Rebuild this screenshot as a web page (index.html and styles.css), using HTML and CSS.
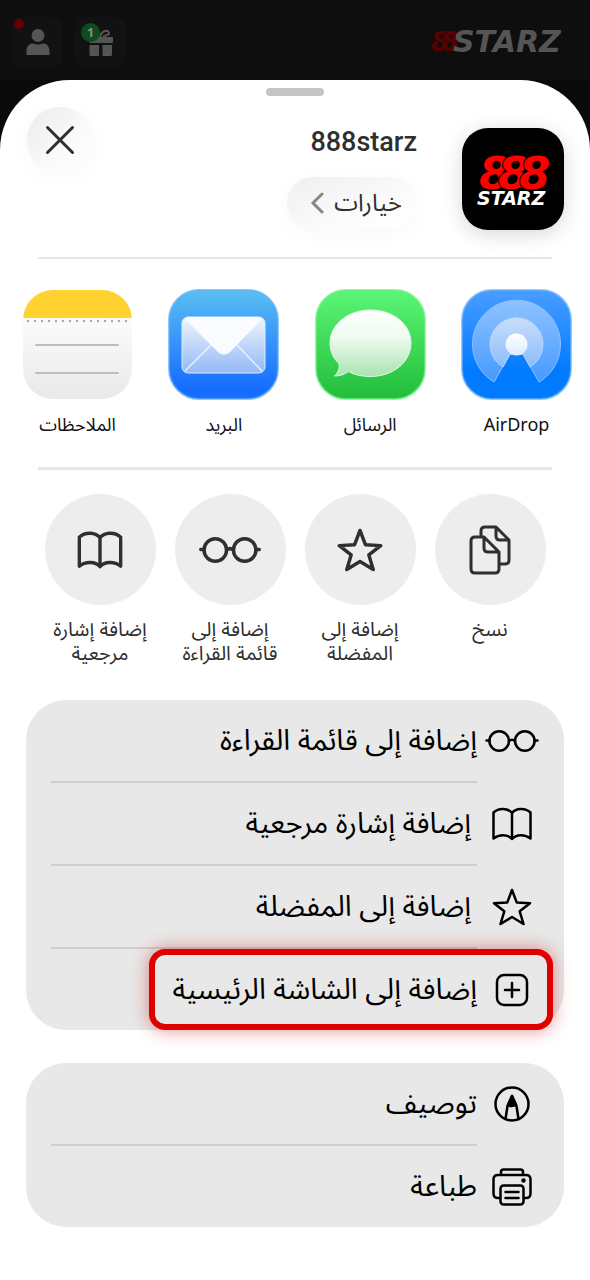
FILE: index.html
```html
<!DOCTYPE html>
<html lang="ar" dir="rtl">
<head>
  <meta charset="UTF-8" />
  <meta name="viewport" content="width=device-width, initial-scale=1.0"/>
  <title>888starz</title>
  <link rel="stylesheet" href="styles.css">
</head>
<body>

  <!-- Shared icons -->
  <svg class="sprite" aria-hidden="true">
    <symbol id="glasses" viewBox="0 0 54 24">
      <circle cx="14.2" cy="12" r="9.8"/>
      <circle cx="39.8" cy="12" r="9.8"/>
      <path d="M24 12q3-2.400 6 0M1.500 11.500h3M49.500 11.500h3"/>
    </symbol>
    <symbol id="book" viewBox="0 0 40 34">
      <path d="M20 6C16 1 7 .5 1.500 5.500v26c5.500-4.500 14.500-4.500 18.500.5 4-5 13-5 18.500-.5v-26C33 .5 24 1 20 6zM20 6v26"/>
    </symbol>
    <symbol id="star" viewBox="0 0 40 38">
      <path d="M20 2l4.700 12.400L38 15.200 27.700 23.300 31.500 36 20 29 8.500 36l3.800-12.700L2 15.200l13.300-.8z"/>
    </symbol>
  </svg>

  <header class="site-header">
    <svg class="site-logo" viewBox="0 0 142 26" role="img" aria-label="888starz">
      <g class="logo-eights">
        <text x="1" y="22">8</text>
        <text x="11" y="22">8</text>
      </g>
      <text class="logo-word" x="23" y="23">STARZ</text>
    </svg>
    <div class="site-actions">
      <button class="site-btn" aria-label="الهدايا">
        <svg width="28" height="28" viewBox="0 0 28 28">
          <path d="M2 9h24v4.500q0 1.500-1.500 1.500h-21Q2 15 2 13.500zM2.500 17H12v11H4Q2.500 28 2.500 26.500zM15.500 17H25v9.500q0 1.500-1.500 1.500h-8z"/>
          <path class="bow" d="M13 9q1-5 5-6t4 3l-6 3"/>
        </svg>
        <span class="badge">1</span>
      </button>
      <button class="site-btn" aria-label="الحساب">
        <svg width="28" height="28" viewBox="0 0 28 28">
          <circle cx="14" cy="7.500" r="6.500"/>
          <path d="M2.500 27v-3.500c0-5.500 3-8 6.500-8q5 2 10 0c3.500 0 6.500 2.500 6.500 8V27z"/>
        </svg>
        <span class="dot"></span>
      </button>
    </div>
  </header>

  <main class="sheet">
    <div class="handle"></div>

    <div class="sheet-header">
      <svg class="app-logo" viewBox="0 0 102 102" role="img" aria-label="888starz">
        <g class="app-eights">
          <text x="17" y="61">8</text>
          <text x="36" y="61">8</text>
          <text x="57" y="61">8</text>
        </g>
        <text class="app-word" x="15" y="77">STARZ</text>
      </svg>
      <div class="app-info">
        <h1>888starz</h1>
        <button class="options">
          خيارات
          <svg width="14" height="24" viewBox="0 0 14 24"><path d="M12 3L3 12l9 9"/></svg>
        </button>
      </div>
      <button class="close" aria-label="إغلاق">
        <svg width="30" height="30" viewBox="0 0 30 30"><path d="M2.500 2.500l25 25M27.500 2.500l-25 25"/></svg>
      </button>
    </div>

    <hr class="divider">

    <div class="apps">
      <button class="app">
        <svg viewBox="0 0 111 111">
          <defs>
            <linearGradient id="airBg" x2="0" y2="1"><stop offset="0" stop-color="#4a9dff"/><stop offset=".75" stop-color="#007aff"/></linearGradient>
            <linearGradient id="airOuter" x2="0" y2="1"><stop offset="0" stop-color="#8fc2ff"/><stop offset="1" stop-color="#459aff"/></linearGradient>
            <linearGradient id="airInner" x2="0" y2="1"><stop offset="0" stop-color="#c9defb"/><stop offset="1" stop-color="#8cbcfa"/></linearGradient>
            <linearGradient id="airDot" x2="0" y2="1"><stop offset="0" stop-color="#fff"/><stop offset="1" stop-color="#dcebfd"/></linearGradient>
          </defs>
          <rect x="1" y="1" width="109" height="109" rx="30" fill="url(#airBg)" stroke="#69b2ff" stroke-opacity=".7" stroke-width="2"/>
          <path d="M33 93A44 44 0 1 1 78 93L62 65H49z" fill="url(#airOuter)" stroke="#8cc1ff"/>
          <path d="M42 78A26.500 26.500 0 1 1 69 78L62 65H49z" fill="url(#airInner)" stroke="#b7d5ff"/>
          <circle cx="55.500" cy="55.500" r="11" fill="url(#airDot)"/>
        </svg>
        <span>AirDrop</span>
      </button>
      <button class="app">
        <svg viewBox="0 0 111 111">
          <defs>
            <linearGradient id="msgBg" x2="0" y2="1"><stop offset="0" stop-color="#5bf675"/><stop offset="1" stop-color="#22bd3b"/></linearGradient>
            <linearGradient id="msgBubble" x2="0" y2="1"><stop offset="0" stop-color="#fff"/><stop offset=".4" stop-color="#effbf0"/><stop offset="1" stop-color="#a9e3b0"/></linearGradient>
          </defs>
          <rect x="1" y="1" width="109" height="109" rx="30" fill="url(#msgBg)" stroke="#6cef81" stroke-opacity=".7" stroke-width="2"/>
          <path d="M55.500 21C33 21 15 35.500 15 54c0 9 4 16 9 20.500 1 5-1 9-4.500 12.500 6 0 10.500-2 14-4.500 6 3.500 14 5 22 5C78 87.500 96 73 96 54S78 21 55.500 21z" fill="url(#msgBubble)" stroke="#e3fae6"/>
        </svg>
        <span>الرسائل</span>
      </button>
      <button class="app">
        <svg viewBox="0 0 111 111">
          <defs>
            <linearGradient id="mailBg" x2="0" y2="1"><stop offset="0" stop-color="#59bff2"/><stop offset=".9" stop-color="#176dff"/></linearGradient>
            <linearGradient id="mailBody" x2="0" y2="1"><stop offset="0" stop-color="#eff5fe"/><stop offset="1" stop-color="#93b9f6"/></linearGradient>
          </defs>
          <rect x="1" y="1" width="109" height="109" rx="30" fill="url(#mailBg)" stroke="#5faef8" stroke-opacity=".7" stroke-width="2"/>
          <rect x="14" y="28" width="83" height="56" rx="6" fill="url(#mailBody)" stroke="#dcebff"/>
          <path d="M17 82L46 53M94 82L66 53" stroke="#eaf3ff" stroke-width="1.500"/>
          <path d="M17 30q2-2 5-2h67q3 0 5 2L64 61q-8 9-16 0z" fill="#fafcff"/>
        </svg>
        <span>البريد</span>
      </button>
      <button class="app">
        <svg viewBox="0 0 111 111">
          <defs>
            <linearGradient id="notesBg" x2="0" y2="1"><stop offset=".3" stop-color="#fbfbfb"/><stop offset="1" stop-color="#e8e8e8"/></linearGradient>
            <clipPath id="notesClip"><rect x="1" y="1" width="109" height="109" rx="30"/></clipPath>
          </defs>
          <g clip-path="url(#notesClip)">
            <rect width="111" height="111" fill="url(#notesBg)"/>
            <rect width="111" height="29" fill="#ffd230"/>
          </g>
          <path d="M6 32h101" stroke="#aaa" stroke-width="2.400" stroke-linecap="round" stroke-dasharray="0 7"/>
          <path d="M14 56h82M14 84h82" stroke="#bdbdbd" stroke-width="2" stroke-linecap="round"/>
        </svg>
        <span>الملاحظات</span>
      </button>
    </div>

    <hr class="divider thick">

    <div class="actions">
      <button class="action">
        <span class="circle">
          <svg class="icon" width="42" height="50" viewBox="0 0 42 50">
            <path d="M12 12V6q0-4 4-4h11l13 13v20q0 4-4 4h-5M27 2v9q0 4 4 4h9M6 12h9l15 15v17q0 4-4 4H6q-4 0-4-4V16q0-4 4-4zM15 12v11q0 4 4 4h11"/>
          </svg>
        </span>
        <span>نسخ</span>
      </button>
      <button class="action">
        <span class="circle"><svg class="icon" width="46" height="44"><use href="#star"/></svg></span>
        <span>إضافة إلى المفضلة</span>
      </button>
      <button class="action">
        <span class="circle"><svg class="icon" width="62" height="28"><use href="#glasses"/></svg></span>
        <span>إضافة إلى قائمة القراءة</span>
      </button>
      <button class="action">
        <span class="circle"><svg class="icon" width="46" height="38"><use href="#book"/></svg></span>
        <span>إضافة إشارة مرجعية</span>
      </button>
    </div>

    <ul class="list">
      <li>
        <button class="row">
          <svg class="icon" width="54" height="24"><use href="#glasses"/></svg>
          <span>إضافة إلى قائمة القراءة</span>
        </button>
      </li>
      <li>
        <button class="row inset">
          <svg class="icon" width="54" height="34"><use href="#book"/></svg>
          <span>إضافة إشارة مرجعية</span>
        </button>
      </li>
      <li>
        <button class="row inset">
          <svg class="icon" width="54" height="38"><use href="#star"/></svg>
          <span>إضافة إلى المفضلة</span>
        </button>
      </li>
      <li>
        <button class="row highlight">
          <svg class="icon" width="54" height="34" viewBox="0 0 54 34">
            <rect x="12" y="2" width="30" height="30" rx="7"/>
            <path d="M27 10v14M20 17h14"/>
          </svg>
          <span>إضافة إلى الشاشة الرئيسية</span>
        </button>
      </li>
    </ul>

    <ul class="list">
      <li>
        <button class="row">
          <svg class="icon" width="54" height="36" viewBox="0 0 54 36">
            <circle cx="27" cy="18" r="16.500"/>
            <path d="M20.500 33l2-13L27 10l4.500 10 2 13"/>
            <path class="solid" d="M27 10l-4 9q4 2 8 0z"/>
          </svg>
          <span>توصيف</span>
        </button>
      </li>
      <li>
        <button class="row">
          <svg class="icon" width="54" height="38" viewBox="0 0 54 38">
            <path d="M16 7V4q0-2.500 2.500-2.500h17Q38 1.500 38 4v3M15 30h-2q-4.500 0-4.500-4.500v-14Q8.500 7 13 7h28q4.500 0 4.500 4.500v14q0 4.500-4.500 4.500h-2"/>
            <rect x="15.500" y="17.500" width="23" height="19" rx="3"/>
            <path d="M20.500 24h13M20.500 30h13"/>
            <circle class="solid" cx="38.500" cy="12.500" r="1"/>
          </svg>
          <span>طباعة</span>
        </button>
      </li>
    </ul>
  </main>

</body>
</html>
```

FILE: styles.css
```css
* {
  box-sizing: border-box;
  margin: 0;
  padding: 0;
}

body {
  display: flex;
  flex-direction: column;
  min-height: 100vh;
  font-family: 'Noto Sans', 'Noto Sans Arabic', 'DejaVu Sans', sans-serif;
  background: #0a0a0a;
  color: #2f2f2f;
}

button {
  border: none;
  background: none;
  font: inherit;
  color: inherit;
  cursor: pointer;
}

.sprite {
  position: absolute;
  width: 0;
  height: 0;
}

/* Dimmed page behind the sheet */
.site-header {
  display: flex;
  align-items: center;
  justify-content: space-between;
  height: 80px;
  padding: 4px 18px 0 12px;
  background: #0e0e0e;
}

.site-logo {
  width: 142px;
  height: 26px;
  overflow: visible;
  direction: ltr;
  font-family: 'DejaVu Sans', sans-serif;
  font-weight: bold;
  font-style: italic;
  font-size: 26px;
}

.logo-eights {
  fill: #5a0000;
  stroke: #0e0e0e;
  paint-order: stroke;
}

.logo-word {
  fill: #555;
  font-size: 30px;
}

.site-actions {
  display: flex;
  gap: 12px;
}

.site-btn {
  position: relative;
  display: flex;
  align-items: center;
  justify-content: center;
  width: 51px;
  height: 51px;
  border-radius: 12px;
  background: #121212;
  fill: #555;
}

.bow {
  fill: none;
  stroke: #555;
  stroke-width: 2;
}

.badge {
  position: absolute;
  top: 6px;
  left: 6px;
  width: 19px;
  height: 19px;
  border-radius: 50%;
  background: #0b4d1f;
  color: #888;
  font-size: 13px;
  font-weight: bold;
  line-height: 19px;
  text-align: center;
}

.dot {
  position: absolute;
  top: 2px;
  left: 2px;
  width: 10px;
  height: 10px;
  border-radius: 50%;
  background: #630000;
}

/* Share sheet */
.sheet {
  flex: 1;
  padding: 8px 0 20px;
  border-radius: 70px 70px 0 0;
  background: #fff;
}

.handle {
  width: 58px;
  height: 8px;
  margin: 0 auto;
  border-radius: 4px;
  background: #c5c5c7;
}

.sheet-header {
  display: flex;
  align-items: flex-start;
  height: 161px;
  padding: 11px 26px 0 27px;
}

.app-logo {
  width: 102px;
  height: 102px;
  margin-top: 21px;
  border-radius: 26px;
  background: #000;
  box-shadow: 0 4px 20px rgba(0, 0, 0, 0.16);
  direction: ltr;
  font-family: 'DejaVu Sans', sans-serif;
  font-weight: bold;
  font-style: italic;
}

.app-eights {
  fill: #f00;
  stroke: #000;
  stroke-width: 2;
  paint-order: stroke;
  font-size: 45px;
}

.app-word {
  fill: #fff;
  font-size: 19px;
}

.app-info {
  display: flex;
  flex-direction: column;
  align-items: flex-start;
  gap: 21px;
  margin: 21px 45px 0 0;
}

h1 {
  font-family: Roboto, sans-serif;
  font-size: 27px;
  font-weight: 500;
  line-height: 28px;
}

.options {
  display: flex;
  align-items: center;
  gap: 10px;
  width: 130px;
  height: 52px;
  padding: 0 15px;
  border-radius: 26px;
  background: linear-gradient(to bottom right, #efefef, #fbfbfb 60%, #fff);
  box-shadow: 0 4px 20px rgba(0, 0, 0, 0.03);
  font-size: 24px;
}

.options svg {
  fill: none;
  stroke: #888;
  stroke-width: 3;
  stroke-linecap: round;
}

.close {
  display: flex;
  align-items: center;
  justify-content: center;
  width: 66px;
  height: 66px;
  margin-right: auto;
  border-radius: 50%;
  background: linear-gradient(to bottom right, #ebebeb, #fafafa 60%, #fff);
  box-shadow: 0 4px 20px rgba(0, 0, 0, 0.03);
}

.close svg {
  fill: none;
  stroke: #2f2f2f;
  stroke-width: 3;
  stroke-linecap: round;
}

.divider {
  height: 2px;
  margin: 0 38px;
  border: none;
  background: #e6e6e6;
}

.divider.thick {
  height: 3px;
}

/* Apps */
.apps {
  display: flex;
  justify-content: space-between;
  height: 208px;
  padding: 30px 18px 0 22px;
}

.app {
  display: flex;
  flex-direction: column;
  align-items: center;
  gap: 12px;
  width: 111px;
  color: #111;
  font-size: 18px;
  line-height: 24px;
}

.app svg {
  width: 111px;
  height: 111px;
  fill: none;
}

/* Quick actions */
.actions {
  display: grid;
  grid-template-columns: repeat(4, 1fr);
  height: 230px;
  padding: 24px 35px 0;
}

.action {
  display: flex;
  flex-direction: column;
  align-items: center;
  gap: 12px;
  padding: 0 8px;
  font-size: 20px;
  line-height: 24px;
}

.circle {
  display: flex;
  align-items: center;
  justify-content: center;
  width: 111px;
  height: 111px;
  border-radius: 50%;
  background: #ededed;
}

.icon {
  flex-shrink: 0;
  fill: none;
  stroke: currentColor;
  stroke-width: 2.5;
  stroke-linecap: round;
  stroke-linejoin: round;
}

.circle .icon {
  stroke-width: 3;
}

.icon .solid {
  fill: currentColor;
}

/* Lists */
.list {
  margin: 0 26px 33px;
  border-radius: 40px;
  background: #e8e8e8;
  color: #000;
  list-style: none;
}

.row {
  display: flex;
  align-items: center;
  gap: 8px;
  width: 100%;
  height: 81px;
  padding: 0 25px;
  font-size: 29px;
  text-align: right;
  white-space: nowrap;
}

.row.inset {
  gap: 14px;
}

.list li:not(:last-child)::after {
  content: '';
  display: block;
  height: 2px;
  margin: 0 87px 0 25px;
  background: #cfcfcf;
}

/* Item to tap */
.row.highlight {
  width: fit-content;
  margin-right: 11px;
  padding: 0 8px 0 18px;
  border: 6px solid #e00000;
  border-radius: 16px;
  background: #e8e8e8;
  box-shadow: 0 0 18px rgba(200, 0, 0, 0.45);
}
```
